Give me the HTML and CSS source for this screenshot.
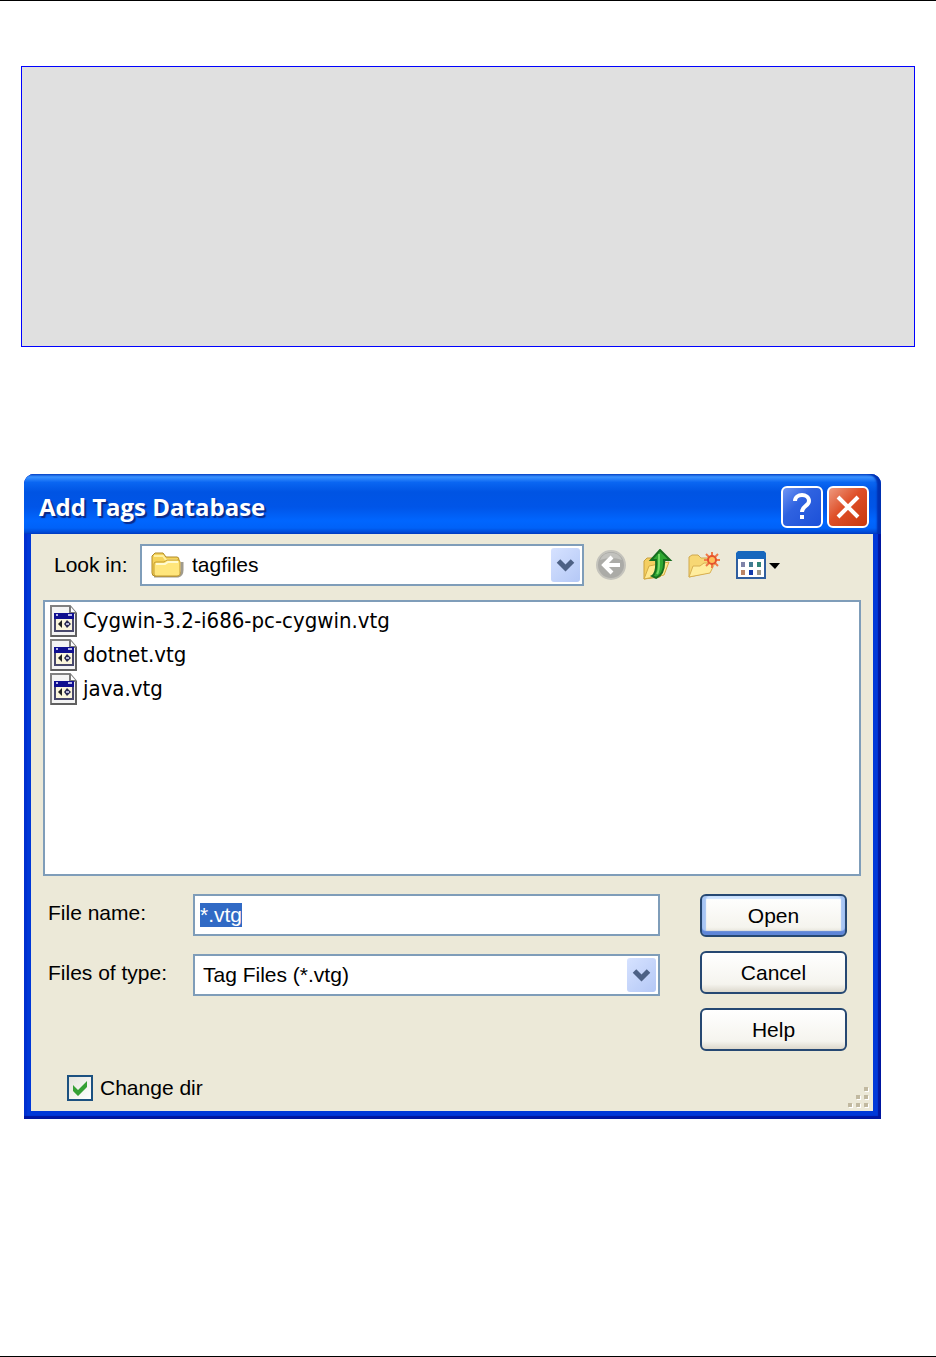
FILE: index.html
```html
<!DOCTYPE html>
<html lang="en">
<head>
    <meta charset="UTF-8">
    <meta name="viewport" content="width=device-width, initial-scale=1.0">
    <title>Add Tags Database</title>
    <link rel="stylesheet" href="styles.css">
</head>
<body>
    <svg class="sprite" aria-hidden="true">
        <symbol id="chevron" viewBox="0 0 28 34">
            <path d="M7 13l7 7 7-7" fill="none" stroke="#4d6185" stroke-width="5"/>
        </symbol>
        <symbol id="file" viewBox="0 0 28 32">
            <path d="M1 1h19l6 7v23H1z" fill="#f4f4f4" stroke="#808080" stroke-width="2"/>
            <path d="M26 8v23H1" fill="none" stroke="#606060" stroke-width="2"/>
            <path d="M20 1v7h6" fill="#fff" stroke="#777" stroke-width="2"/>
            <path d="M5 9h18v17H5z" fill="#fbf6dc" stroke="#48486c" stroke-width="2"/>
            <path d="M4 8h20v6H4z" fill="#101090"/>
            <path d="M6 10h2M18 10h4" stroke="#b8b8e8" stroke-width="2"/>
            <path d="M8 19l4-4v8z" fill="#222"/>
            <path d="M17 15l4 4-4 4-3-4z" fill="#282850"/>
            <path d="M16 19h3" stroke="#b8b8d8" stroke-width="2"/>
        </symbol>
    </svg>

    <main class="page">
        <div class="code-block"></div>

        <section class="dialog" aria-labelledby="dialogTitle">
            <header class="titlebar">
                <h1 class="titlebar__text" id="dialogTitle">Add Tags Database</h1>
                <button type="button" class="titlebar__btn" aria-label="What's this">
                    <svg viewBox="0 0 36 36" aria-hidden="true">
                        <path d="M11 12c0-8 14-8 14 0 0 5-7 5-7 11" fill="none" stroke="#fff" stroke-width="4"/>
                        <path d="M16 26h4v4h-4z" fill="#fff"/>
                    </svg>
                </button>
                <button type="button" class="titlebar__btn titlebar__btn--close" aria-label="Close">
                    <svg viewBox="0 0 36 36" aria-hidden="true">
                        <path d="M8 8l20 20M28 8L8 28" stroke="#fff" stroke-width="4"/>
                    </svg>
                </button>
            </header>

            <form class="dialog__body">
                <div class="lookin">
                    <label class="lookin__label" for="lookIn">Look in:</label>
                    <div class="combo combo--folder">
                        <select id="lookIn" class="combo__select">
                            <option>tagfiles</option>
                        </select>
                        <svg class="combo__folder" viewBox="0 0 34 28" aria-hidden="true">
                            <path d="M4 25h24q4-1 4-6V11" fill="none" stroke="#77705c" stroke-width="3" opacity=".7"/>
                            <path d="M2 22V5l3-3h8l3 4h11q2 0 2 3v14q-1 2-3 2H5q-3 0-3-3z" fill="#f5d35a" stroke="#b18a24"/>
                            <path d="M4 5h9l3 4h11" fill="none" stroke="#fff0a0" stroke-width="2"/>
                            <path d="M4 23V13q0-2 2-2h8l3-2h11q2 0 2 2v12q0 2-3 2H6q-2 0-2-2z" fill="#ffe67c" stroke="#c39a2c"/>
                            <path d="M6 13h9l3-2h10" fill="none" stroke="#fffad0" stroke-width="2"/>
                        </svg>
                        <svg class="combo__arrow" aria-hidden="true"><use href="#chevron"/></svg>
                    </div>
                    <div class="toolbar">
                        <button type="button" class="toolbar__btn" aria-label="Back">
                            <svg width="32" height="32" viewBox="0 0 32 32" aria-hidden="true">
                                <circle cx="16" cy="16" r="14" fill="#ababa7" stroke="#c4c3bc" stroke-width="2"/>
                                <path d="M5 11a12 12 0 0 1 22 0q-10-4-22 0z" fill="#c2c2be"/>
                                <path d="M17 8l-8 8 8 8M10 16h15" fill="none" stroke="#fff" stroke-width="4"/>
                            </svg>
                        </button>
                        <button type="button" class="toolbar__btn" aria-label="Up one level">
                            <svg width="32" height="32" viewBox="0 0 32 32" aria-hidden="true">
                                <path d="M3 30V12l3-3h6l3 3h9v11l-5 5z" fill="#f4ce60" stroke="#c9a03d"/>
                                <path d="M3 30l5-13 20-4-5 13z" fill="#ffe991" stroke="#d4ab45"/>
                                <path d="M11 27q5-3 4-16h-5L19 1l10 10h-6q1 14-8 18z" fill="#2fa832" stroke="#176e20" stroke-width="2"/>
                                <path d="M18 5v10q0 7-2 10" fill="none" stroke="#77d867" stroke-width="2"/>
                            </svg>
                        </button>
                        <button type="button" class="toolbar__btn" aria-label="Create new folder">
                            <svg width="34" height="32" viewBox="0 0 34 32" aria-hidden="true">
                                <path d="M2 28V8l3-2h6l3 3h10v12l-4 3z" fill="#f7d774" stroke="#d1a94f"/>
                                <path d="M2 28l4-11h7l4-3h11l-5 10z" fill="#ffed9e" stroke="#d8b052"/>
                                <path d="M25 3v16M17 11h16M19 5l12 12M31 5L19 17" stroke="#f07a48" stroke-width="2"/>
                                <circle cx="25" cy="11" r="4" fill="#ffc05a" stroke="#e5532d" stroke-width="2"/>
                            </svg>
                        </button>
                        <button type="button" class="toolbar__btn" aria-label="View menu">
                            <svg width="46" height="32" viewBox="0 0 46 32" aria-hidden="true">
                                <path d="M2 5h28v24H2z" fill="#fff" stroke="#2f5e9e" stroke-width="2"/>
                                <path d="M1 4l2-2h26l2 2v6H1z" fill="#1767bd"/>
                                <path d="M6 13h4v5H6z" fill="#7f83a8"/>
                                <path d="M14 13h4v5h-4z" fill="#427b91"/>
                                <path d="M22 13h4v5h-4z" fill="#318679"/>
                                <path d="M6 21h4v5H6z" fill="#bb8565"/>
                                <path d="M14 21h4v5h-4z" fill="#123bab"/>
                                <path d="M22 21h4v5h-4z" fill="#9b9789"/>
                                <path d="M34 14h11l-5 6z" fill="#000"/>
                            </svg>
                        </button>
                    </div>
                </div>

                <ul class="files" aria-label="Files">
                    <li class="files__item">
                        <svg class="files__icon" aria-hidden="true"><use href="#file"/></svg>
                        <span>Cygwin-3.2-i686-pc-cygwin.vtg</span>
                    </li>
                    <li class="files__item">
                        <svg class="files__icon" aria-hidden="true"><use href="#file"/></svg>
                        <span>dotnet.vtg</span>
                    </li>
                    <li class="files__item">
                        <svg class="files__icon" aria-hidden="true"><use href="#file"/></svg>
                        <span>java.vtg</span>
                    </li>
                </ul>

                <div class="bottom">
                    <div class="fields">
                        <label for="fileName">File name:</label>
                        <input type="text" id="fileName" class="textbox" value="*.vtg" autocomplete="off" spellcheck="false">
                        <label for="fileType">Files of type:</label>
                        <div class="combo">
                            <select id="fileType" class="combo__select">
                                <option>Tag Files (*.vtg)</option>
                            </select>
                            <svg class="combo__arrow" aria-hidden="true"><use href="#chevron"/></svg>
                        </div>
                    </div>
                    <div class="actions">
                        <button type="submit" class="btn btn--default">Open</button>
                        <button type="button" class="btn">Cancel</button>
                        <button type="button" class="btn">Help</button>
                    </div>
                </div>

                <label class="check">
                    <input type="checkbox" class="check__box" checked>
                    <span>Change dir</span>
                    <svg class="check__mark" viewBox="0 0 26 26" aria-hidden="true">
                        <path d="M6 10l5 5 9-9v6l-9 9-5-5z" fill="#35a035"/>
                    </svg>
                </label>

                <svg class="grip" viewBox="0 0 22 22" aria-hidden="true">
                    <path d="M18 2h4v4h-4zM10 10h4v4h-4zM18 10h4v4h-4zM2 18h4v4H2zM10 18h4v4h-4zM18 18h4v4h-4z" fill="#fff"/>
                    <path d="M17 1h4v4h-4zM9 9h4v4H9zM17 9h4v4h-4zM1 17h4v4H1zM9 17h4v4H9zM17 17h4v4h-4z" fill="#c1b9a0"/>
                </svg>
            </form>
        </section>
    </main>

    <script>
        // Pre-select the file filter
        const fileName = document.getElementById('fileName');
        fileName.focus();
        fileName.select();
    </script>
</body>
</html>
```

FILE: styles.css
```css
:root {
    --face: #ece9d8;
    --field-border: #7f9db9;
    --highlight: #316ac5;
    --font-ui: "Liberation Sans", Arial, sans-serif;
    --font-list: "DejaVu Sans Condensed", "DejaVu Sans", Tahoma, sans-serif;
    --font-title: "Open Sans", "Trebuchet MS", sans-serif;
}

* {
    box-sizing: border-box;
}

body {
    margin: 0;
    background: #fff;
    color: #000;
    font-family: var(--font-ui);
    font-size: 21px;
    line-height: 24px;
}

button,
input,
select {
    font: inherit;
    color: inherit;
    margin: 0;
}

.sprite {
    position: absolute;
    width: 0;
    height: 0;
}

.page {
    min-height: 100vh;
    padding: 65px 21px;
    border-top: 1px solid #000;
    border-bottom: 1px solid #000;
}

.code-block {
    min-height: 281px;
    background: #e0e0e0;
    border: 1px solid #00f;
}

/* Window frame */
.dialog {
    margin: 127px 34px 0 3px;
    padding: 0 8px 8px 7px;
    background: #0038d8;
    border-radius: 10px 10px 0 0;
    box-shadow: inset -3px -3px 1px #0016a0, inset 3px 0 1px #0030d0;
}

.titlebar {
    display: flex;
    align-items: center;
    gap: 4px;
    height: 60px;
    margin: 0 -8px 0 -7px;
    padding: 6px 12px 0 15px;
    border-radius: 10px 10px 0 0;
    background: linear-gradient(#0a4fd0 0, #3a92ff 5%, #0a66f2 14%, #0054e3 30%, #0055e8 55%, #0066ff 78%, #0062f8 90%, #0040c8 100%);
    box-shadow: inset -4px 0 2px #0030b0;
}

.titlebar__text {
    flex: 1;
    margin: 0;
    color: #fff;
    font-family: var(--font-title);
    font-size: 24px;
    line-height: 32px;
    font-weight: 700;
    text-shadow: 2px 2px 1px #0a2a88;
}

.titlebar__btn {
    width: 42px;
    height: 42px;
    padding: 1px;
    border: 2px solid #fff;
    border-radius: 6px;
    background: linear-gradient(135deg, #6f95f5, #2f62e0 40%, #1c50d8);
}

.titlebar__btn--close {
    background: linear-gradient(135deg, #ee9a80, #de4f28 45%, #c8390f);
}

.titlebar__btn svg {
    display: block;
}

.dialog__body {
    position: relative;
    padding: 10px 12px 5px;
    background: var(--face);
}

/* Look in row */
.lookin {
    display: flex;
    align-items: center;
    padding-left: 11px;
}

.lookin__label {
    width: 86px;
}

.toolbar {
    display: flex;
    align-items: center;
    gap: 14px;
    width: 277px;
    padding-left: 11px;
}

.toolbar__btn {
    padding: 0;
    border: 0;
    background: none;
}

.toolbar__btn svg {
    display: block;
}

.combo {
    position: relative;
    flex: 1;
}

.combo__select {
    display: block;
    width: 100%;
    height: 42px;
    padding: 0 40px 0 8px;
    appearance: none;
    background: #fff;
    border: 2px solid var(--field-border);
    border-radius: 0;
}

.combo--folder .combo__select {
    padding-left: 50px;
}

.combo__folder {
    position: absolute;
    left: 10px;
    top: 7px;
    width: 34px;
    height: 28px;
}

.combo__arrow {
    position: absolute;
    top: 4px;
    right: 4px;
    width: 29px;
    height: 34px;
    background: linear-gradient(135deg, #d6e2ff, #b4c8f6);
    border-radius: 3px;
    pointer-events: none;
}

/* File list */
.files {
    min-height: 276px;
    margin: 14px 0 18px;
    padding: 2px 5px;
    list-style: none;
    background: #fff;
    border: 2px solid var(--field-border);
    font-family: var(--font-list);
    font-size: 22px;
}

.files__item {
    display: flex;
    align-items: center;
    gap: 5px;
    height: 34px;
}

.files__icon {
    width: 28px;
    height: 32px;
}

/* Fields and buttons */
.bottom {
    display: flex;
    gap: 40px;
    padding: 0 14px 0 5px;
}

.fields {
    flex: 1;
    display: grid;
    grid-template-columns: 145px 1fr;
    align-content: start;
    row-gap: 18px;
}

.fields label {
    padding-top: 7px;
}

.textbox {
    height: 42px;
    padding: 0 5px;
    background: #fff;
    border: 2px solid var(--field-border);
    border-radius: 0;
    outline: none;
}

.textbox::selection {
    background: var(--highlight);
    color: #fff;
}

.actions {
    display: flex;
    flex-direction: column;
    gap: 14px;
    width: 147px;
}

.btn {
    height: 43px;
    padding: 0;
    background: linear-gradient(#fff, #f5f4ee 80%, #dcd8cc);
    border: 2px solid #264872;
    border-radius: 6px;
}

.btn--default {
    box-shadow: inset 0 -4px 1px #5f86d8, inset 4px 0 1px #a8c6f4, inset -4px 0 1px #a8c6f4, inset 0 3px 1px #cfe4ff;
}

/* Change dir */
.check {
    position: relative;
    display: flex;
    align-items: center;
    gap: 7px;
    width: fit-content;
    margin: 24px 0 0 24px;
}

.check__box {
    width: 26px;
    height: 26px;
    appearance: none;
    background: linear-gradient(135deg, #e4e4dc, #fff);
    border: 2px solid #1c5180;
}

.check__mark {
    position: absolute;
    left: 0;
    top: 0;
    width: 26px;
    height: 26px;
    visibility: hidden;
}

.check__box:checked ~ .check__mark {
    visibility: visible;
}

.check {
    margin-bottom: 5px;
}

.grip {
    position: absolute;
    right: 4px;
    bottom: 3px;
    width: 22px;
    height: 22px;
}
```
